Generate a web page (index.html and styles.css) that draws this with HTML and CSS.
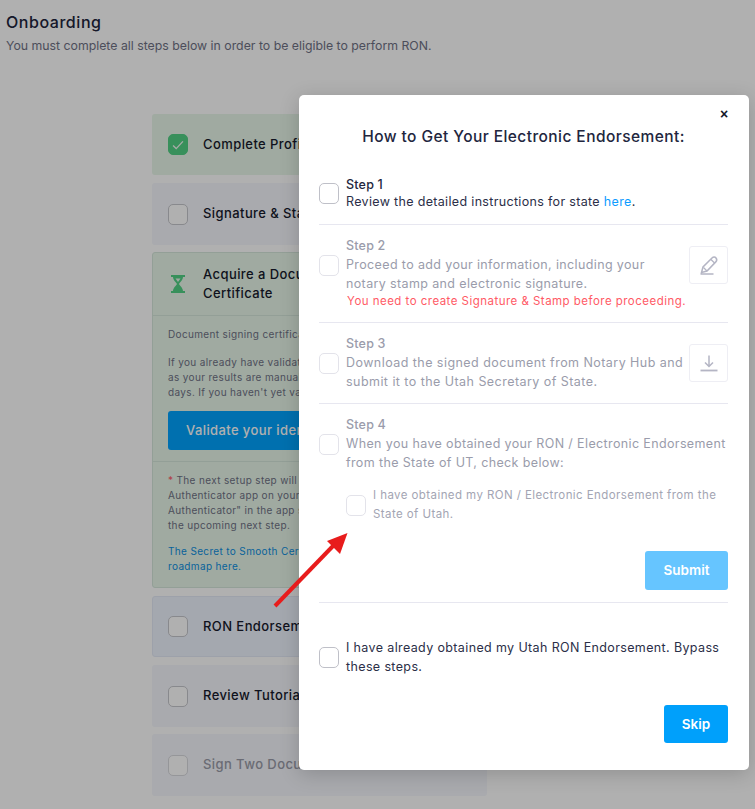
FILE: index.html
```html
<!DOCTYPE html>
<html lang="en">
<head>
<meta charset="utf-8">
<title>Onboarding</title>
<link rel="stylesheet" href="styles.css">
</head>
<body>
<main class="page">
  <h1 class="page-title">Onboarding</h1>
  <p class="page-sub">You must complete all steps below in order to be eligible to perform RON.</p>
  <section class="cards">
    <div class="card card-done">
      <span class="box box-green"><svg viewBox="0 0 20 20" width="20" height="20"><path d="M4.500 10.500l3.500 3.500 7.500-8" fill="none" stroke="#f2f7f2" stroke-width="1.500"/></svg></span>
      <span class="card-label">Complete Profile</span>
    </div>
    <div class="card card-grey">
      <span class="box"></span>
      <span class="card-label">Signature &amp; Stamp</span>
    </div>
    <div class="card-open">
      <div class="card-head">
        <svg class="hourglass" viewBox="0 0 16 18" width="16" height="18"><path d="M1 1h14M1 17h14" stroke="#52d185" stroke-width="2" fill="none"/><path d="M3 1.500h10c0 4-3 5.500-4 7.500 1 2 4 3.500 4 7.500H3c0-4 3-5.500 4-7.500-1-2-4-3.500-4-7.500z" fill="#52d185"/><path d="M5.500 3.500h5L8 7z" fill="#e8f7ea"/></svg>
        <span class="card-label card-label-wrap">Acquire a Document<br>Certificate</span>
      </div>
      <div class="card-body">
        <p class="small">Document signing certificate</p>
        <p class="small small-gap">If you already have validated<br>as your results are manually<br>days. If you haven't yet validated</p>
        <div class="validate">Validate your identity</div>
      </div>
      <div class="card-notes">
        <p class="small"><span class="star">*</span> The next setup step will require<br>Authenticator app on your mobile<br>Authenticator" in the app store<br>the upcoming next step.</p>
        <p class="small small-link">The Secret to Smooth Certification<br>roadmap here.</p>
      </div>
    </div>
    <div class="card card-blue">
      <span class="box"></span>
      <span class="card-label">RON Endorsement</span>
    </div>
    <div class="card card-grey">
      <span class="box"></span>
      <span class="card-label">Review Tutorial</span>
    </div>
    <div class="card card-grey card-off">
      <span class="box box-off"></span>
      <span class="card-label">Sign Two Documents</span>
    </div>
  </section>
</main>

<div class="backdrop"></div>

<aside class="modal">
  <button class="close" type="button">×</button>
  <h2 class="modal-title">How to Get Your Electronic Endorsement:</h2>

  <div class="step step-1">
    <span class="check"></span>
    <div>
      <div class="step-name">Step 1</div>
      <div class="step-text">Review the detailed instructions for state <a class="link">here</a>.</div>
    </div>
  </div>

  <div class="step step-2 muted">
    <span class="check check-off check-raised"></span>
    <div>
      <div class="step-name">Step 2</div>
      <div class="step-text">Proceed to add your information, including your<br>notary stamp and electronic signature.</div>
      <div class="step-error">You need to create Signature &amp; Stamp before proceeding.</div>
    </div>
    <span class="icon-btn icon-btn-pen"><svg viewBox="0 0 20 20" width="20" height="20"><path d="M1.500 19h13M2.500 17.500l1.500-5.500 9-9c1.300-1.300 3-1.300 4 0s1 2.700-.2 3.900L8 16z" fill="none" stroke="#b4b5c4" stroke-width="1.500"/><path d="M12 4.500l3.800 3.800M4.500 12.500L8 16" fill="none" stroke="#b4b5c4" stroke-width="1.300"/></svg></span>
  </div>

  <div class="step step-3 muted">
    <span class="check check-off"></span>
    <div>
      <div class="step-name">Step 3</div>
      <div class="step-text">Download the signed document from Notary Hub and<br>submit it to the Utah Secretary of State.</div>
    </div>
    <span class="icon-btn"><svg viewBox="0 0 20 20" width="20" height="20"><path d="M10 2.500v10.500M6 9.500l4 4 4-4" fill="none" stroke="#b4b5c4" stroke-width="1.500"/><path d="M1.500 17.500h17" fill="none" stroke="#b4b5c4" stroke-width="1.800"/></svg></span>
  </div>

  <div class="step-4-wrap muted">
    <div class="step step-4">
      <span class="check check-off"></span>
      <div>
        <div class="step-name">Step 4</div>
        <div class="step-text">When you have obtained your RON / Electronic Endorsement<br>from the State of UT, check below:</div>
      </div>
    </div>
    <div class="sub-check">
      <span class="check check-off"></span>
      <div class="sub-text">I have obtained my RON / Electronic Endorsement from the<br>State of Utah.</div>
    </div>
    <div class="actions actions-submit"><span class="btn btn-light">Submit</span></div>
  </div>

  <div class="bypass">
    <span class="check"></span>
    <div class="step-text">I have already obtained my Utah RON Endorsement. Bypass<br>these steps.</div>
  </div>
  <div class="actions actions-skip"><span class="btn btn-skip">Skip</span></div>
</aside>

<svg class="arrow" viewBox="0 0 755 809" width="755" height="809"><path d="M275 606L333 546" stroke="#e81c1c" stroke-width="4" fill="none"/><path d="M347.500 533L327 541 340 554z" fill="#e81c1c"/></svg>
</body>
</html>
```
FILE: styles.css
```css
* { box-sizing: border-box; }
html, body { margin: 0; padding: 0; height: 809px; overflow: hidden; background: #fff; }
body { font-family: Inter, "Noto Sans", sans-serif; color: #1f2338; position: relative; }

.page { padding: 12px 6px 0; }
.page-title { margin: 0; font-size: 16px; line-height: 20px; font-weight: 500; letter-spacing: .55px; color: #20243c; }
.page-sub { margin: 5px 0 0; font-size: 12.300px; line-height: 17px; color: #6f7285; }

.cards { width: 335px; margin: 60px 0 0 146px; display: flex; flex-direction: column; }
.card { height: 62px; display: flex; align-items: center; padding-left: 16px; border-radius: 3px; margin-bottom: 7px; }
.card-done { background: #e8f7ea; height: 61px; margin-bottom: 8px; }
.card-grey { background: #f5f6fc; }
.card-blue { background: #eef3fe; border: 1px solid #e4eaf6; padding-left: 15px; height: 61px; margin-bottom: 8px; }
.card-off .card-label { color: #9a9ca8; }
.box { width: 20px; height: 21px; border: 1px solid #c6c7cc; border-radius: 5px; background: #fff; flex: none; }
.box-green { background: #52d185; border-color: #52d185; display: flex; align-items: center; justify-content: center; }
.box-off { border-color: #d8d9de; }
.card-label { margin: 0 0 2px 15px; font-size: 13px; font-weight: 500; letter-spacing: .42px; color: #161a2c; white-space: nowrap; }
.card-label-wrap { line-height: 19px; margin: 0 0 0 17px; }

.card-open { height: 336px; margin-bottom: 8px; background: #e8f7ea; border: 1px solid #d5e6db; border-radius: 3px; }
.card-head { height: 63px; display: flex; align-items: center; padding-left: 17px; border-bottom: 1px solid #d5e6db; }
.hourglass { flex: none; }
.card-body { padding: 11px 15px 0; height: 146px; border-bottom: 1px solid #d5e6db; }
.small { margin: 0; font-size: 10px; line-height: 15px; letter-spacing: .35px; color: #6f7285; white-space: nowrap; }
.small-gap { margin-top: 13px; }
.validate { margin-top: 11px; height: 39px; width: 300px; background: #00a2fe; border-radius: 3px; color: #fff; font-size: 13px; font-weight: 500; letter-spacing: .4px; line-height: 39px; padding-left: 18px; }
.card-notes { padding: 11px 15px 0; }
.star { color: #ff5a66; }
.small-link { margin-top: 11px; color: #0d8fe0; }

.backdrop { position: absolute; inset: 0; background: rgba(0, 0, 0, .31); }

.modal { position: absolute; left: 299px; top: 95px; width: 450px; height: 675px; background: #fff; border-radius: 5px; padding: 0 21px 0 20px; box-shadow: 0 4px 20px rgba(0, 0, 0, .18); }
.close { position: absolute; top: 12px; right: 20px; width: 10px; height: 14px; padding: 0; border: 0; background: none; font-family: "Liberation Sans", sans-serif; font-size: 14px; line-height: 14px; font-weight: 700; color: #14172a; }
.modal-title { margin: 0; padding-top: 32px; height: 81px; text-align: center; font-size: 15.500px; line-height: 20px; font-weight: 500; letter-spacing: .43px; color: #22263e; }

.step { display: grid; grid-template-columns: 27px 1fr auto; align-items: center; }
.step-1 { height: 49px; padding-bottom: 15px; border-bottom: 1px solid #e7e7f0; }
.step-1 .step-name, .step-1 .step-text { line-height: 17px; }
.step-1 .step-text { letter-spacing: .33px; }
.step-2 { height: 98px; border-bottom: 1px solid #e7e7f0; }
.step-3 { height: 81px; border-bottom: 1px solid #e7e7f0; }
.step-3 .step-text { letter-spacing: .45px; }
.step-4 { height: 80px; grid-template-columns: 27px 1fr; }
.check { width: 20px; height: 21px; border: 1px solid #bfc0c8; border-radius: 5px; background: #fff; flex: none; }
.check-off { border-color: #e3e3ea; }
.check-raised { margin-top: -17px; }
.step-name { font-size: 12.500px; line-height: 18px; font-weight: 500; letter-spacing: .2px; color: #22263e; }
.step-text { font-size: 12.500px; line-height: 19px; letter-spacing: .37px; color: #2b2f48; white-space: nowrap; }
.link { color: #0e9cff; }
.muted .step-name { color: #9a9cab; }
.muted .step-text { color: #9a9cab; }
.step-error { padding-left: 1px; font-size: 11.500px; line-height: 17px; letter-spacing: .47px; color: #ff5a66; white-space: nowrap; }
.icon-btn { width: 39px; height: 38px; border: 1px solid #eeeef4; border-radius: 3px; display: flex; align-items: center; justify-content: center; }
.icon-btn-pen { margin-top: -17px; }

.sub-check { display: grid; grid-template-columns: 27px 1fr; align-items: center; padding: 2px 0 0 27px; }
.sub-text { font-size: 11.500px; line-height: 19px; letter-spacing: .42px; color: #a3a5b3; white-space: nowrap; }

.actions { display: flex; justify-content: flex-end; }
.actions-submit { padding: 27px 0 12px; border-bottom: 1px solid #e7e7f0; }
.btn { display: block; text-align: center; color: #fff; font-size: 13.500px; font-weight: 600; border-radius: 3px; }
.btn-light { width: 83px; height: 39px; line-height: 39px; background: #66c5ff; }
.btn-skip { width: 64px; height: 38px; line-height: 38px; background: #00a0fb; }
.bypass { display: grid; grid-template-columns: 27px 1fr; align-items: center; padding-top: 35px; }
.actions-skip { padding-top: 29px; }

.arrow { position: absolute; left: 0; top: 0; pointer-events: none; }
```
